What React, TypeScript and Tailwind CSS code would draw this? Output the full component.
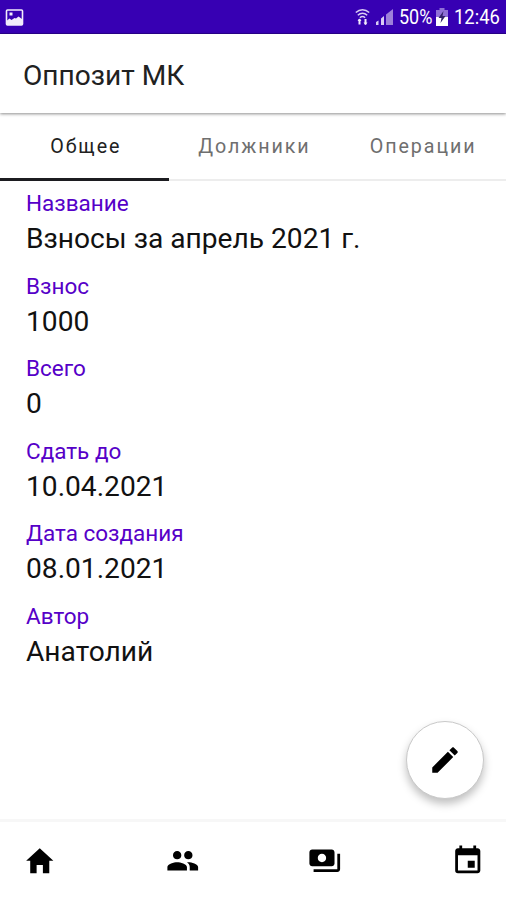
import React, { useState } from "react";
import { IoMdCreate, IoMdHome } from "react-icons/io";
import { MdEvent, MdPayments, MdPeople } from "react-icons/md";

const tabs = ["Общее", "Должники", "Операции"];

const fields = [
  { label: "Название", value: "Взносы за апрель 2021 г." },
  { label: "Взнос", value: "1000" },
  { label: "Всего", value: "0" },
  { label: "Сдать до", value: "10.04.2021" },
  { label: "Дата создания", value: "08.01.2021" },
  { label: "Автор", value: "Анатолий" },
];

const navItems = [
  { label: "Главная", icon: IoMdHome },
  { label: "Участники", icon: MdPeople },
  { label: "Взносы", icon: MdPayments },
  { label: "События", icon: MdEvent },
];

const StatusBar = () => (
  <div className="flex h-[34px] shrink-0 items-center border-b border-[#2a0090] bg-[#3700b3] pl-[5px] pr-[6px] text-white">
    {/* Screenshot notification */}
    <svg className="mt-px" width="19" height="17" viewBox="0 0 18 17">
      <rect x="1" y="1" width="16" height="15" rx="1" fill="none" stroke="#f1ecfb" strokeWidth="1.6" />
      <path d="M4 3.500h3v3H4z" fill="#f1ecfb" />
      <path d="M1.500 11.500 4 9.500l2 1.500 3-2 1.500.5L13 7.500l3.500 2.500v6h-15z" fill="#f1ecfb" />
    </svg>
    <div className="ml-auto flex items-center">
      {/* Wi-Fi with transfer arrows */}
      <svg width="15" height="18" viewBox="0 0 15 18" fill="none" stroke="#d9cdf3">
        <path d="M.8 4.500c4-3.600 9.400-3.600 13.400 0M2.800 7.200c2.800-2.500 6.600-2.500 9.400 0M4.900 9.700c1.600-1.400 3.600-1.400 5.200 0" strokeWidth="1.500" />
        <path d="M4.500 11v5.500M10.500 11v5.500" strokeWidth="2" stroke="#f1ecfb" />
        <path d="m2.500 13 2-2.500 2 2.500zM8.500 14.500l2 2.500 2-2.500z" fill="#f1ecfb" stroke="none" />
      </svg>
      {/* Mobile signal */}
      <svg className="ml-[6px]" width="17" height="18" viewBox="0 0 17 18">
        <path d="M0 17v-3l2.500-1.500V17zM5 17v-6.500l3-2.500v9z" fill="#d9cdf3" />
        <path d="M10 17V6.500L17 1v16z" fill="#9d80da" />
      </svg>
      <span className="ml-[6px] mt-px w-[33px] origin-left scale-x-[.9] whitespace-nowrap text-[20px] leading-none">50%</span>
      {/* Battery */}
      <svg className="ml-[4px] mt-px" width="12" height="18" viewBox="0 0 12 18">
        <path d="M3.500 0h5v2H12v7H0V2h3.500z" fill="#8f70d6" />
        <path d="M0 9h12v9H0z" fill="#fff" />
        <path d="M7.500 3 2.500 10h3L4.500 15l5-7h-3z" fill="#33216b" />
      </svg>
      <span className="ml-[6px] mt-px w-[46px] origin-left scale-x-[.92] whitespace-nowrap text-[20px] leading-none">12:46</span>
    </div>
  </div>
);

const App = () => {
  const [activeTab, setActiveTab] = useState(tabs[0]);

  return (
    <div className="flex h-[900px] w-[506px] flex-col overflow-hidden bg-white font-['Roboto',sans-serif]">
      <StatusBar />

      <header className="z-10 flex h-[79px] shrink-0 items-center bg-white pl-[23px] pt-[6px] shadow-[0_1px_3px_rgba(0,0,0,0.45)]">
        <h1 className="text-[28.100px] leading-none text-[#212121]">Оппозит МК</h1>
      </header>

      <nav className="grid h-[68px] shrink-0 grid-cols-3 border-b-2 border-[#ededed]">
        {tabs.map((tab) => (
          <button
            key={tab}
            onClick={() => setActiveTab(tab)}
            className={`-mb-0.5 border-b-[3px] pl-[3px] pt-[2px] text-[19.700px] leading-none tracking-[1.900px] ${
              activeTab === tab
                ? "border-[#1c1c20] text-[#212121]"
                : "border-transparent text-[#6f6f6f]"
            }`}
          >
            {tab}
          </button>
        ))}
      </nav>

      <main className="relative flex-1 pl-[26px] pt-[8px]">
        <dl>
          {fields.map((field) => (
            <div key={field.label} className="h-[82.600px]">
              <dt className="text-[22.500px] leading-[28px] text-[#5600c8]">{field.label}</dt>
              <dd className="pt-[3px] text-[28.150px] leading-[38px] text-[#111]">{field.value}</dd>
            </div>
          ))}
        </dl>

        <button
          aria-label="Редактировать"
          className="absolute bottom-[20px] right-[22px] flex size-[78px] items-center justify-center rounded-full border border-[#c9c9c9] bg-white shadow-[0_5px_9px_rgba(0,0,0,0.25)]"
        >
          <IoMdCreate size={34} />
        </button>
      </main>

      <footer className="flex h-[81px] shrink-0 items-center justify-between border-t-[3px] border-[#f7f7f7] pl-[23px] pr-[22px]">
        {navItems.map((item) => {
          const Icon = item.icon;
          return (
            <button key={item.label} aria-label={item.label}>
              <Icon size={33.5} />
            </button>
          );
        })}
      </footer>
    </div>
  );
};

export default App;
